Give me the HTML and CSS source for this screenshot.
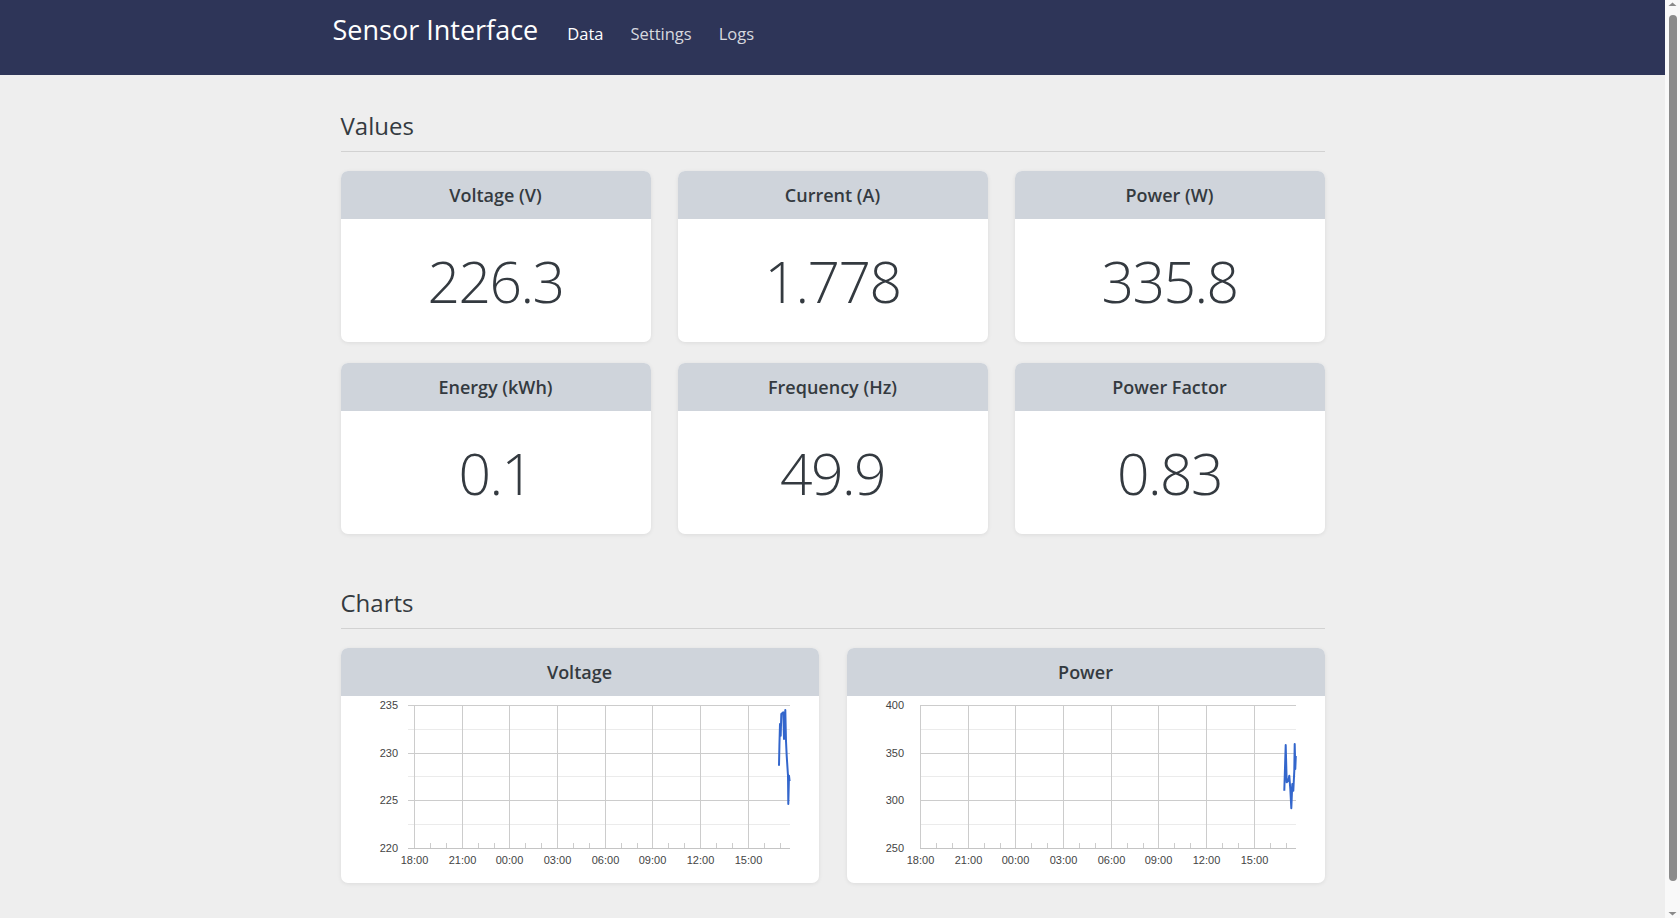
FILE: index.html
```html
<!DOCTYPE html>
<html lang="en">
<head>
<meta charset="utf-8">
<title>Sensor Interface</title>
<link rel="stylesheet" href="styles.css">
</head>
<body>
<div class="page">
<nav class="navbar">
  <div class="nav-inner">
    <a class="brand" href="#">Sensor Interface</a>
    <a class="nav-link active" href="#">Data</a>
    <a class="nav-link" href="#">Settings</a>
    <a class="nav-link" href="#">Logs</a>
  </div>
</nav>
<main class="container">
  <section class="section">
    <h2 class="section-title first">Values</h2>
    <div class="value-grid">
      <div class="card"><div class="card-header">Voltage (V)</div><div class="card-body value">226.3</div></div>
      <div class="card"><div class="card-header">Current (A)</div><div class="card-body value">1.778</div></div>
      <div class="card"><div class="card-header">Power (W)</div><div class="card-body value">335.8</div></div>
      <div class="card"><div class="card-header">Energy (kWh)</div><div class="card-body value">0.1</div></div>
      <div class="card"><div class="card-header">Frequency (Hz)</div><div class="card-body value">49.9</div></div>
      <div class="card"><div class="card-header">Power Factor</div><div class="card-body value">0.83</div></div>
    </div>
  </section>
  <section class="section">
    <h2 class="section-title second">Charts</h2>
    <div class="chart-grid">
      <div class="card">
        <div class="card-header">Voltage</div>
        <div class="chart-body">
          <svg class="chart" viewBox="0 0 478 187" width="478" height="187">
            <g class="minor">
              <line x1="67" y1="33.5" x2="449" y2="33.5"/>
              <line x1="67" y1="80.5" x2="449" y2="80.5"/>
              <line x1="67" y1="128.5" x2="449" y2="128.5"/>
            </g>
            <g class="major">
              <line x1="67" y1="9.5" x2="449" y2="9.5"/>
              <line x1="67" y1="57.5" x2="449" y2="57.5"/>
              <line x1="67" y1="104.5" x2="449" y2="104.5"/>
              <line x1="73.5" y1="9" x2="73.5" y2="152"/>
              <line x1="121.5" y1="9" x2="121.5" y2="152"/>
              <line x1="168.5" y1="9" x2="168.5" y2="152"/>
              <line x1="216.5" y1="9" x2="216.5" y2="152"/>
              <line x1="264.5" y1="9" x2="264.5" y2="152"/>
              <line x1="311.5" y1="9" x2="311.5" y2="152"/>
              <line x1="359.5" y1="9" x2="359.5" y2="152"/>
              <line x1="407.5" y1="9" x2="407.5" y2="152"/>
            </g>
            <g class="ticks">
              <line x1="89.5" y1="147" x2="89.5" y2="152"/><line x1="105.5" y1="147" x2="105.5" y2="152"/>
              <line x1="137.5" y1="147" x2="137.5" y2="152"/><line x1="153.5" y1="147" x2="153.5" y2="152"/>
              <line x1="184.5" y1="147" x2="184.5" y2="152"/><line x1="200.5" y1="147" x2="200.5" y2="152"/>
              <line x1="232.5" y1="147" x2="232.5" y2="152"/><line x1="248.5" y1="147" x2="248.5" y2="152"/>
              <line x1="280.5" y1="147" x2="280.5" y2="152"/><line x1="296.5" y1="147" x2="296.5" y2="152"/>
              <line x1="327.5" y1="147" x2="327.5" y2="152"/><line x1="343.5" y1="147" x2="343.5" y2="152"/>
              <line x1="375.5" y1="147" x2="375.5" y2="152"/><line x1="391.5" y1="147" x2="391.5" y2="152"/>
              <line x1="423.5" y1="147" x2="423.5" y2="152"/><line x1="439.5" y1="147" x2="439.5" y2="152"/>
            </g>
            <line class="axis" x1="67" y1="152.5" x2="449" y2="152.5"/>
            <g class="ylabels">
              <text x="57" y="13">235</text>
              <text x="57" y="61">230</text>
              <text x="57" y="108">225</text>
              <text x="57" y="156">220</text>
            </g>
            <g class="xlabels">
              <text x="73.5" y="168">18:00</text>
              <text x="121.5" y="168">21:00</text>
              <text x="168.5" y="168">00:00</text>
              <text x="216.5" y="168">03:00</text>
              <text x="264.5" y="168">06:00</text>
              <text x="311.5" y="168">09:00</text>
              <text x="359.5" y="168">12:00</text>
              <text x="407.5" y="168">15:00</text>
            </g>
            <polyline class="series" points="438,69.7 438.4,50 439,28 439.7,39.7 440.3,18 442.3,16.3 443,43 444.3,14 445,45 445.7,59.7 447,79.7 447.3,108 448,79.7 448.6,85"/>
          </svg>
        </div>
      </div>
      <div class="card">
        <div class="card-header">Power</div>
        <div class="chart-body">
          <svg class="chart" viewBox="0 0 478 187" width="478" height="187">
            <g class="minor">
              <line x1="73" y1="33.5" x2="449" y2="33.5"/>
              <line x1="73" y1="80.5" x2="449" y2="80.5"/>
              <line x1="73" y1="128.5" x2="449" y2="128.5"/>
            </g>
            <g class="major">
              <line x1="73" y1="9.5" x2="449" y2="9.5"/>
              <line x1="73" y1="57.5" x2="449" y2="57.5"/>
              <line x1="73" y1="104.5" x2="449" y2="104.5"/>
              <line x1="73.5" y1="9" x2="73.5" y2="152"/>
              <line x1="121.5" y1="9" x2="121.5" y2="152"/>
              <line x1="168.5" y1="9" x2="168.5" y2="152"/>
              <line x1="216.5" y1="9" x2="216.5" y2="152"/>
              <line x1="264.5" y1="9" x2="264.5" y2="152"/>
              <line x1="311.5" y1="9" x2="311.5" y2="152"/>
              <line x1="359.5" y1="9" x2="359.5" y2="152"/>
              <line x1="407.5" y1="9" x2="407.5" y2="152"/>
            </g>
            <g class="ticks">
              <line x1="89.5" y1="147" x2="89.5" y2="152"/><line x1="105.5" y1="147" x2="105.5" y2="152"/>
              <line x1="137.5" y1="147" x2="137.5" y2="152"/><line x1="153.5" y1="147" x2="153.5" y2="152"/>
              <line x1="184.5" y1="147" x2="184.5" y2="152"/><line x1="200.5" y1="147" x2="200.5" y2="152"/>
              <line x1="232.5" y1="147" x2="232.5" y2="152"/><line x1="248.5" y1="147" x2="248.5" y2="152"/>
              <line x1="280.5" y1="147" x2="280.5" y2="152"/><line x1="296.5" y1="147" x2="296.5" y2="152"/>
              <line x1="327.5" y1="147" x2="327.5" y2="152"/><line x1="343.5" y1="147" x2="343.5" y2="152"/>
              <line x1="375.5" y1="147" x2="375.5" y2="152"/><line x1="391.5" y1="147" x2="391.5" y2="152"/>
              <line x1="423.5" y1="147" x2="423.5" y2="152"/><line x1="439.5" y1="147" x2="439.5" y2="152"/>
            </g>
            <line class="axis" x1="73" y1="152.5" x2="449" y2="152.5"/>
            <g class="ylabels">
              <text x="57" y="13">400</text>
              <text x="57" y="61">350</text>
              <text x="57" y="108">300</text>
              <text x="57" y="156">250</text>
            </g>
            <g class="xlabels">
              <text x="73.5" y="168">18:00</text>
              <text x="121.5" y="168">21:00</text>
              <text x="168.5" y="168">00:00</text>
              <text x="216.5" y="168">03:00</text>
              <text x="264.5" y="168">06:00</text>
              <text x="311.5" y="168">09:00</text>
              <text x="359.5" y="168">12:00</text>
              <text x="407.5" y="168">15:00</text>
            </g>
            <polyline class="series" points="437.3,94.7 438.7,49 439.7,86.3 441.3,84.7 442.3,79.7 443.3,93 444.3,112.3 445.3,88 446.3,94.7 447.3,74.7 447.7,48 448.3,73 448.8,60"/>
          </svg>
        </div>
      </div>
    </div>
  </section>
</main>
</div>
<div class="scrollbar" aria-hidden="true">
  <div class="sb-btn"><svg width="15" height="15" viewBox="0 0 15 15"><polygon points="3.5,6 7.5,2.5 11.5,6" fill="#8a8a8a"/></svg></div>
  <div class="sb-thumb"></div>
  <div class="sb-btn"><svg width="15" height="15" viewBox="0 0 15 15"><polygon points="3.5,9 7.5,12.5 11.5,9" fill="#8a8a8a"/></svg></div>
</div>
</body>
</html>
```
FILE: styles.css
```css
html, body {
  margin: 0;
  height: 100%;
  overflow: hidden;
  background: #eeeeee;
}

body {
  display: flex;
  font-family: "Open Sans", "Noto Sans", sans-serif;
  color: #343a40;
}

.page {
  flex: 1;
  min-width: 0;
  height: 100vh;
  overflow: hidden;
  background: #eeeeee;
}

.scrollbar {
  width: 15px;
  flex: none;
  height: 100vh;
  display: flex;
  flex-direction: column;
  background: #f9f9f9;
}

.sb-btn {
  height: 15px;
  flex: none;
}

.sb-btn svg {
  display: block;
}

.sb-thumb {
  flex: 1;
  width: 8px;
  margin: 0 auto 22px;
  background: #8b8b8b;
  border-radius: 4px;
}

.navbar {
  height: 75px;
  box-sizing: border-box;
  padding-top: 16px;
  background: #2e3558;
}

.nav-inner {
  width: 1000px;
  margin: 0 auto;
  display: flex;
  align-items: baseline;
  gap: 27px;
}

.brand {
  font-size: 27px;
  line-height: 1;
  color: #ffffff;
  text-decoration: none;
  margin-right: 2px;
}

.nav-link {
  font-size: 16.5px;
  line-height: 1;
  color: rgba(255, 255, 255, 0.82);
  text-decoration: none;
}

.nav-link.active {
  color: #ffffff;
}

.container {
  width: 984px;
  margin: 0 auto;
  padding-bottom: 58px;
}

.section-title {
  font-size: 24px;
  font-weight: 400;
  line-height: 1.2;
  margin: 0 0 19px;
  padding-bottom: 10px;
  border-bottom: 1px solid #d2d2d2;
  color: #343a40;
}

.section-title.first {
  margin-top: 37px;
}

.section-title.second {
  margin-top: 55px;
}

.value-grid {
  display: grid;
  grid-template-columns: repeat(3, 1fr);
  column-gap: 27px;
  row-gap: 21px;
}

.chart-grid {
  display: grid;
  grid-template-columns: repeat(2, 1fr);
  column-gap: 28px;
}

.card {
  background: #ffffff;
  border-radius: 7px;
  overflow: hidden;
  box-shadow: 0 1px 4px rgba(0, 0, 0, 0.08);
}

.card-header {
  height: 48px;
  display: flex;
  align-items: center;
  justify-content: center;
  background: #cfd4db;
  font-size: 18px;
  font-weight: 600;
  color: #343a40;
}

.card-body {
  height: 123px;
  display: flex;
  align-items: center;
  justify-content: center;
}

.value {
  font-size: 57px;
  font-weight: 300;
  line-height: 1;
  letter-spacing: -1.5px;
  color: #343a40;
  padding-top: 2px;
  box-sizing: border-box;
}

.chart-body {
  height: 187px;
}

.chart {
  display: block;
}

.chart .minor line {
  stroke: #ebebeb;
  stroke-width: 1;
}

.chart .major line {
  stroke: #cccccc;
  stroke-width: 1;
}

.chart .ticks line {
  stroke: #cccccc;
  stroke-width: 1;
}

.chart .axis {
  stroke: #c4c4c4;
  stroke-width: 1;
}

.chart text {
  font-family: "Liberation Sans", Arial, sans-serif;
  font-size: 11px;
  fill: #444444;
}

.chart .ylabels text {
  text-anchor: end;
}

.chart .xlabels text {
  text-anchor: middle;
}

.chart .series {
  fill: none;
  stroke: #3366cc;
  stroke-width: 2;
  stroke-linejoin: round;
}
```
